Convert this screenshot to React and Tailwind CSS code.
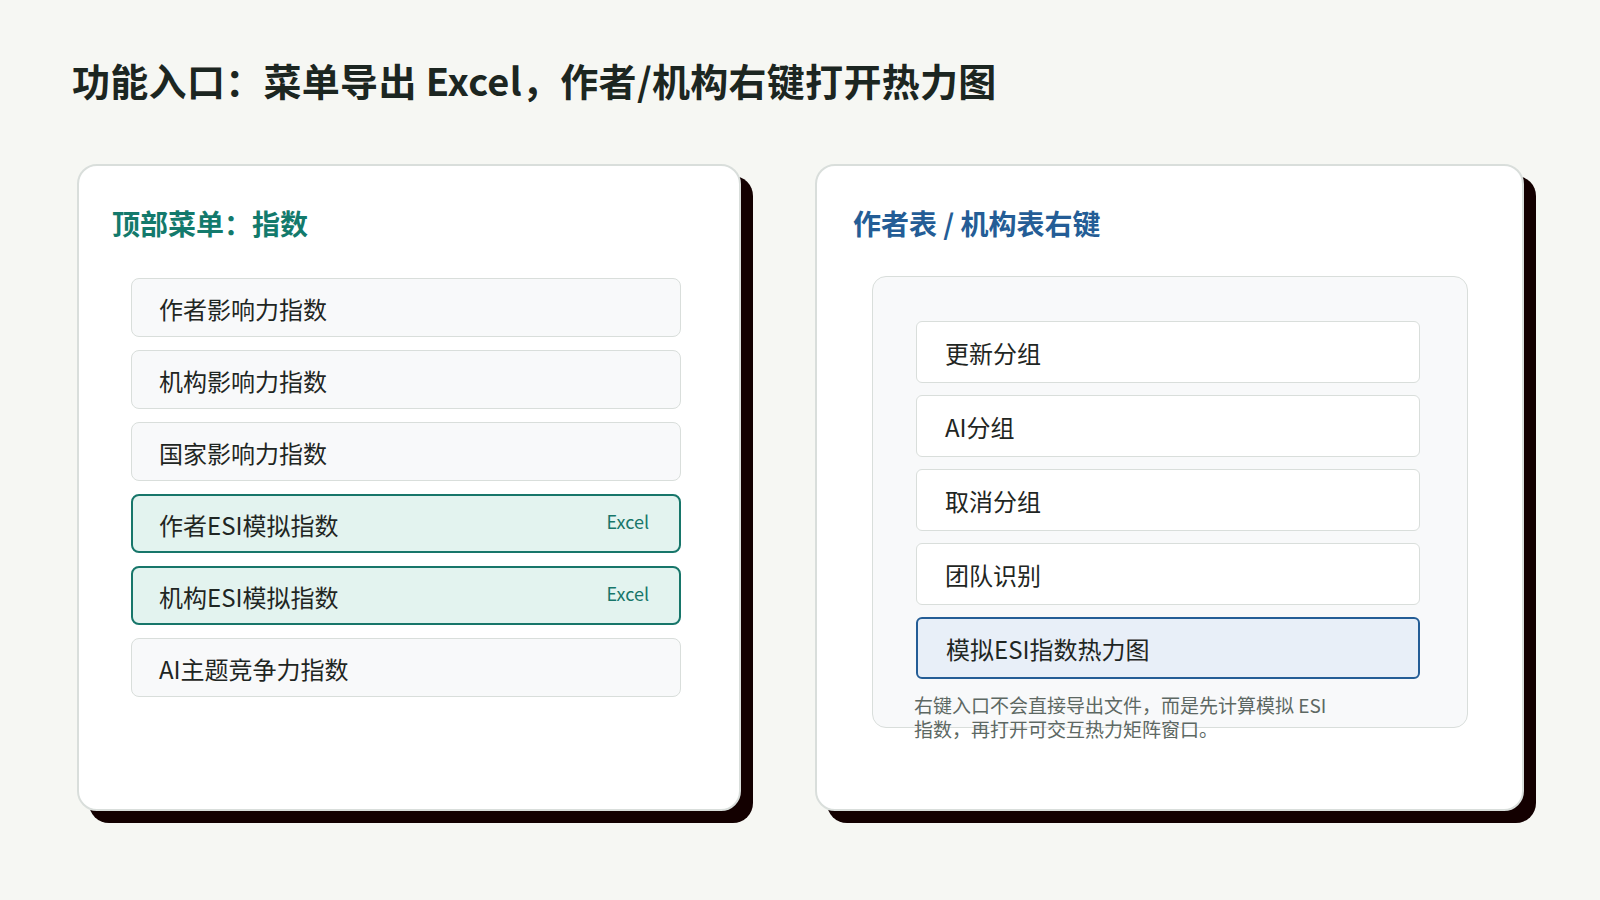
import React from "react";

const font = { fontFamily: '"Noto Sans CJK SC", "Noto Sans", sans-serif' };

const menuItems = [
  { label: "作者影响力指数" },
  { label: "机构影响力指数" },
  { label: "国家影响力指数" },
  { label: "作者ESI模拟指数", excel: true },
  { label: "机构ESI模拟指数", excel: true },
  { label: "AI主题竞争力指数" },
];

const contextItems = [
  { label: "更新分组" },
  { label: "AI分组" },
  { label: "取消分组" },
  { label: "团队识别" },
  { label: "模拟ESI指数热力图", active: true },
];

function MenuRow({ label, excel }) {
  // rows that export to Excel get the teal highlight
  const base =
    "flex h-[59px] items-center justify-between rounded-[8px] pl-[26px] pr-[30px] text-[24px] text-[#1f2623]";
  const look = excel
    ? "border-2 border-[#17766a] bg-[#e3f3ef]"
    : "border border-[#d9dedb] bg-[#f8f9fa] pl-[27px]";
  return (
    <div className={`${base} ${look}`}>
      <span className="mt-[3px]">{label}</span>
      {excel && (
        <span className="-mt-[5px] text-[18px] text-[#17766a]">Excel</span>
      )}
    </div>
  );
}

function ContextRow({ label, active }) {
  const look = active
    ? "border-2 border-[#245d96] bg-[#e8eff8]"
    : "border border-[#d9dedb] bg-white";
  return (
    <div
      className={`flex h-[62px] items-center rounded-[6px] pl-[28px] text-[24px] text-[#1f2623] ${look}`}
    >
      <span className="mt-[2px]">{label}</span>
    </div>
  );
}

export default function App() {
  return (
    <div
      className="h-[900px] w-[1600px] bg-[#f6f7f3] pl-[72px] pt-[54px]"
      style={font}
    >
      <h1 className="text-[38px] font-bold leading-[52px] tracking-[0.3px] text-[#1c2621]">
        功能入口：菜单导出 Excel，作者/机构右键打开热力图
      </h1>

      <div className="mt-[58px] ml-[5px] flex gap-[74px]">
        {/* top menu card */}
        <div className="h-[647px] w-[664px] rounded-[20px] border-2 border-[#d9dedb] bg-white pl-[33px] pt-[39px] shadow-[12px_12px_0_#130000]">
          <h2 className="text-[28px] font-bold leading-[36px] text-[#137a6c]">
            顶部菜单：指数
          </h2>
          <div className="ml-[19px] mt-[37px] flex w-[550px] flex-col gap-[13px]">
            {menuItems.map((item) => (
              <MenuRow key={item.label} {...item} />
            ))}
          </div>
        </div>

        {/* right-click card */}
        <div className="h-[647px] w-[709px] rounded-[20px] border-2 border-[#d9dedb] bg-white pl-[36px] pt-[39px] shadow-[12px_12px_0_#130000]">
          <h2 className="text-[28px] font-bold leading-[36px] text-[#245d96]">
            作者表 / 机构表右键
          </h2>
          <div className="ml-[19px] mt-[35px] h-[452px] w-[596px] rounded-[14px] border border-[#d9dedb] bg-[#f8f9fa] pl-[43px] pt-[44px]">
            <div className="flex w-[504px] flex-col gap-[12px]">
              {contextItems.map((item) => (
                <ContextRow key={item.label} {...item} />
              ))}
            </div>
            <p className="-ml-[2px] mt-[14px] w-[430px] text-[19px] leading-[24px] text-[#5d6863]">
              右键入口不会直接导出文件，而是先计算模拟 ESI 指数，再打开可交互热力矩阵窗口。
            </p>
          </div>
        </div>
      </div>
    </div>
  );
}
